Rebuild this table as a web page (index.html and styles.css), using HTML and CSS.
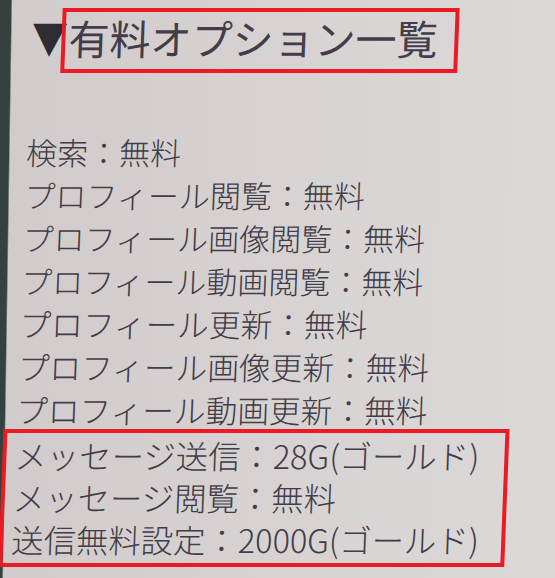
FILE: index.html
```html
<!DOCTYPE html>
<html lang="ja">
<head>
<meta charset="utf-8">
<title>有料オプション一覧</title>
<link rel="stylesheet" href="styles.css">
</head>
<body>
<main class="page">
  <h1 class="title"><span class="tri">▼</span><span class="title-box">有料オプション一覧</span></h1>
  <ul class="list">
    <li>検索：無料</li>
    <li>プロフィール閲覧：無料</li>
    <li>プロフィール画像閲覧：無料</li>
    <li>プロフィール動画閲覧：無料</li>
    <li>プロフィール更新：無料</li>
    <li>プロフィール画像更新：無料</li>
    <li>プロフィール動画更新：無料</li>
  </ul>
  <ul class="list highlight">
    <li>メッセージ送信：28G(ゴールド)</li>
    <li>メッセージ閲覧：無料</li>
    <li>送信無料設定：2000G(ゴールド)</li>
  </ul>
</main>
</body>
</html>
```

FILE: styles.css
```css
html, body {
  height: 100%;
}
body {
  margin: 0;
  overflow: hidden;
  background: linear-gradient(90.9deg, #33423e 0, #33423e 11px, #d1cccb 12.5px, #d8d4d3 60%, #dcd8d7 100%);
  font-family: "Noto Sans CJK JP", "Noto Sans", sans-serif;
  color: #413c48;
}
.page {
  transform: skewX(-2.2deg);
  transform-origin: 0 0;
}
.title {
  margin: 0;
  padding-top: 8px;
  display: flex;
  align-items: flex-start;
  font-weight: 400;
}
.tri {
  margin-left: 33px;
  margin-right: -6px;
  margin-top: 8px;
  font-size: 36px;
  line-height: 40px;
  color: #2f2b33;
  transform: scaleY(1.12);
}
.title-box {
  position: relative;
  border: 4px solid #ea1b24;
  font-size: 41px;
  line-height: 50px;
  padding: 0 17px 7px 3px;
  color: #423d49;
}
.list {
  list-style: none;
  margin: 57px 0 0;
  padding: 0 0 0 32px;
  font-size: 31px;
  font-weight: 300;
  line-height: 43px;
  white-space: nowrap;
}
.list li:nth-child(n+5) {
  font-size: 31.7px;
}
.highlight {
  margin: -2px 0 0 20px;
  width: 506px;
  box-sizing: border-box;
  border: 4px solid #ea1b24;
  padding: 1px 0 3px 8px;
  line-height: 42px;
}
.highlight li:nth-child(n) {
  font-size: 32.4px;
}
```
